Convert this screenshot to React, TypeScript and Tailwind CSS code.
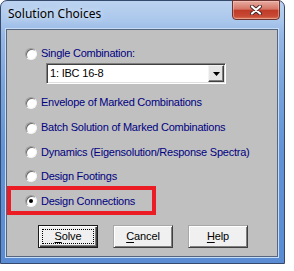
import type { ReactNode } from 'react';

const UI_FONT = "font-['Liberation_Sans',Arial,sans-serif]";

function Radio({ checked = false }: { checked?: boolean }) {
  return (
    <span className="flex h-[12px] w-[12px] shrink-0 items-center justify-center rounded-full border border-t-[#9a9a9a] border-l-[#9a9a9a] border-b-[#f4f4f4] border-r-[#f4f4f4] bg-white shadow-[inset_1px_1px_0_#6a6a6a]">
      {checked && <span className="h-[4px] w-[4px] rounded-full bg-black" />}
    </span>
  );
}

function Option({
  label,
  checked,
  height,
}: {
  label: string;
  checked?: boolean;
  height: string;
}) {
  return (
    <div className={`flex items-center gap-[4px] ${height}`}>
      <Radio checked={checked} />
      <span className="text-[11px] leading-none tracking-[-0.24px] text-[#000080]">
        {label}
      </span>
    </div>
  );
}

function WinButton({
  children,
  isDefault = false,
}: {
  children: ReactNode;
  isDefault?: boolean;
}) {
  return (
    <button
      className={`relative flex h-[23px] w-[60px] items-center justify-center bg-[#f0f0f0] text-[11px] leading-none tracking-[-0.1px] text-black ${
        isDefault
          ? 'border border-[#1a1a1a] shadow-[inset_1px_1px_0_#ffffff,inset_-1px_-1px_0_#404040,inset_-2px_-2px_0_#808080]'
          : 'border border-t-[#a8a8a8] border-l-[#a8a8a8] border-b-[#404040] border-r-[#404040] shadow-[inset_1px_1px_0_#ffffff,inset_-1px_-1px_0_#808080]'
      }`}
    >
      {isDefault && (
        <span className="absolute inset-[3px] border border-dotted border-black" />
      )}
      <span className="relative">{children}</span>
    </button>
  );
}

export default function App() {
  return (
    <div className={`min-h-screen bg-white ${UI_FONT}`}>
      <div className="flex h-[264px] w-[285px] flex-col rounded-t-[7px] border border-[#34496b] bg-[linear-gradient(180deg,#bcd3f0_0px,#acc8ec_18px,#96b8e6_34px,#7ba6de_80px,#6293d7_150px,#5a8cd4_100%)]">
        {/* title bar */}
        <div className="relative flex h-[27px] shrink-0 items-start">
          <span className="ml-[7px] mt-[6px] font-['Noto_Sans',sans-serif] text-[12px] leading-[14px] text-black [text-shadow:0_0_6px_rgba(255,255,255,0.9)]">
            Solution Choices
          </span>
          <div className="absolute right-[4px] top-[-1px] flex h-[20px] w-[48px] items-center justify-center rounded-b-[4px] border border-[#6d3330] bg-[linear-gradient(180deg,#e6aca1_0%,#d57566_45%,#bf3b28_52%,#c84a34_85%,#da7a5c_100%)] shadow-[inset_0_0_0_1px_rgba(255,210,200,0.45)]">
            <svg width="12" height="10" viewBox="0 0 12 10">
              <path
                d="M2 1.5 L10 8.5 M10 1.5 L2 8.5"
                stroke="#4a2624"
                strokeWidth="4"
                strokeLinecap="round"
              />
              <path
                d="M2 1.5 L10 8.5 M10 1.5 L2 8.5"
                stroke="#ffffff"
                strokeWidth="2.2"
                strokeLinecap="round"
              />
            </svg>
          </div>
        </div>

        {/* client area */}
        <div className="mb-[5px] ml-[4px] mr-[5px] flex-1 border border-[#c9dcf5]">
          <div className="relative h-full border border-[#56667e] bg-[#c0c0c0]">
            <div className="flex flex-col pl-[18px] pt-[17px]">
              <Option label="Single Combination:" height="h-[13px]" />

              <div className="ml-[21px] mt-[3px] flex h-[21px] w-[180px] items-center border border-t-[#808080] border-l-[#808080] border-b-white border-r-white bg-white shadow-[inset_1px_1px_0_#404040,inset_-1px_-1px_0_#dfdfdf]">
                <span className="ml-[3px] flex-1 text-[11px] leading-none tracking-[-0.2px] text-black">
                  1: IBC 16-8
                </span>
                <span className="mr-[1px] flex h-[17px] w-[16px] items-center justify-center border border-t-[#f4f4f4] border-l-[#f4f4f4] border-b-[#404040] border-r-[#404040] bg-[#e6e6e6] shadow-[inset_-1px_-1px_0_#808080]">
                  <svg width="7" height="4" viewBox="0 0 7 4">
                    <path d="M0 0 H7 L3.5 4 Z" fill="#000" />
                  </svg>
                </span>
              </div>

              <div className="mt-[6px]">
                <Option label="Envelope of Marked Combinations" height="h-[25px]" />
                <Option label="Batch Solution of Marked Combinations" height="h-[25px]" />
                <Option label="Dynamics (Eigensolution/Response Spectra)" height="h-[24px]" />
                <Option label="Design Footings" height="h-[24px]" />
                <Option label="Design Connections" height="h-[26px]" checked />
              </div>

              <div className="ml-[13px] mt-[11px] flex gap-[15px]">
                <WinButton isDefault>
                  <span className="underline underline-offset-[2px]">S</span>olve
                </WinButton>
                <WinButton>
                  <span className="underline underline-offset-[2px]">C</span>ancel
                </WinButton>
                <WinButton>
                  <span className="underline underline-offset-[2px]">H</span>elp
                </WinButton>
              </div>
            </div>

            {/* highlight box */}
            <div className="absolute left-0 top-[156px] h-[29px] w-[149px] border-4 border-[#ec1c24]" />
          </div>
        </div>
      </div>
    </div>
  );
}
